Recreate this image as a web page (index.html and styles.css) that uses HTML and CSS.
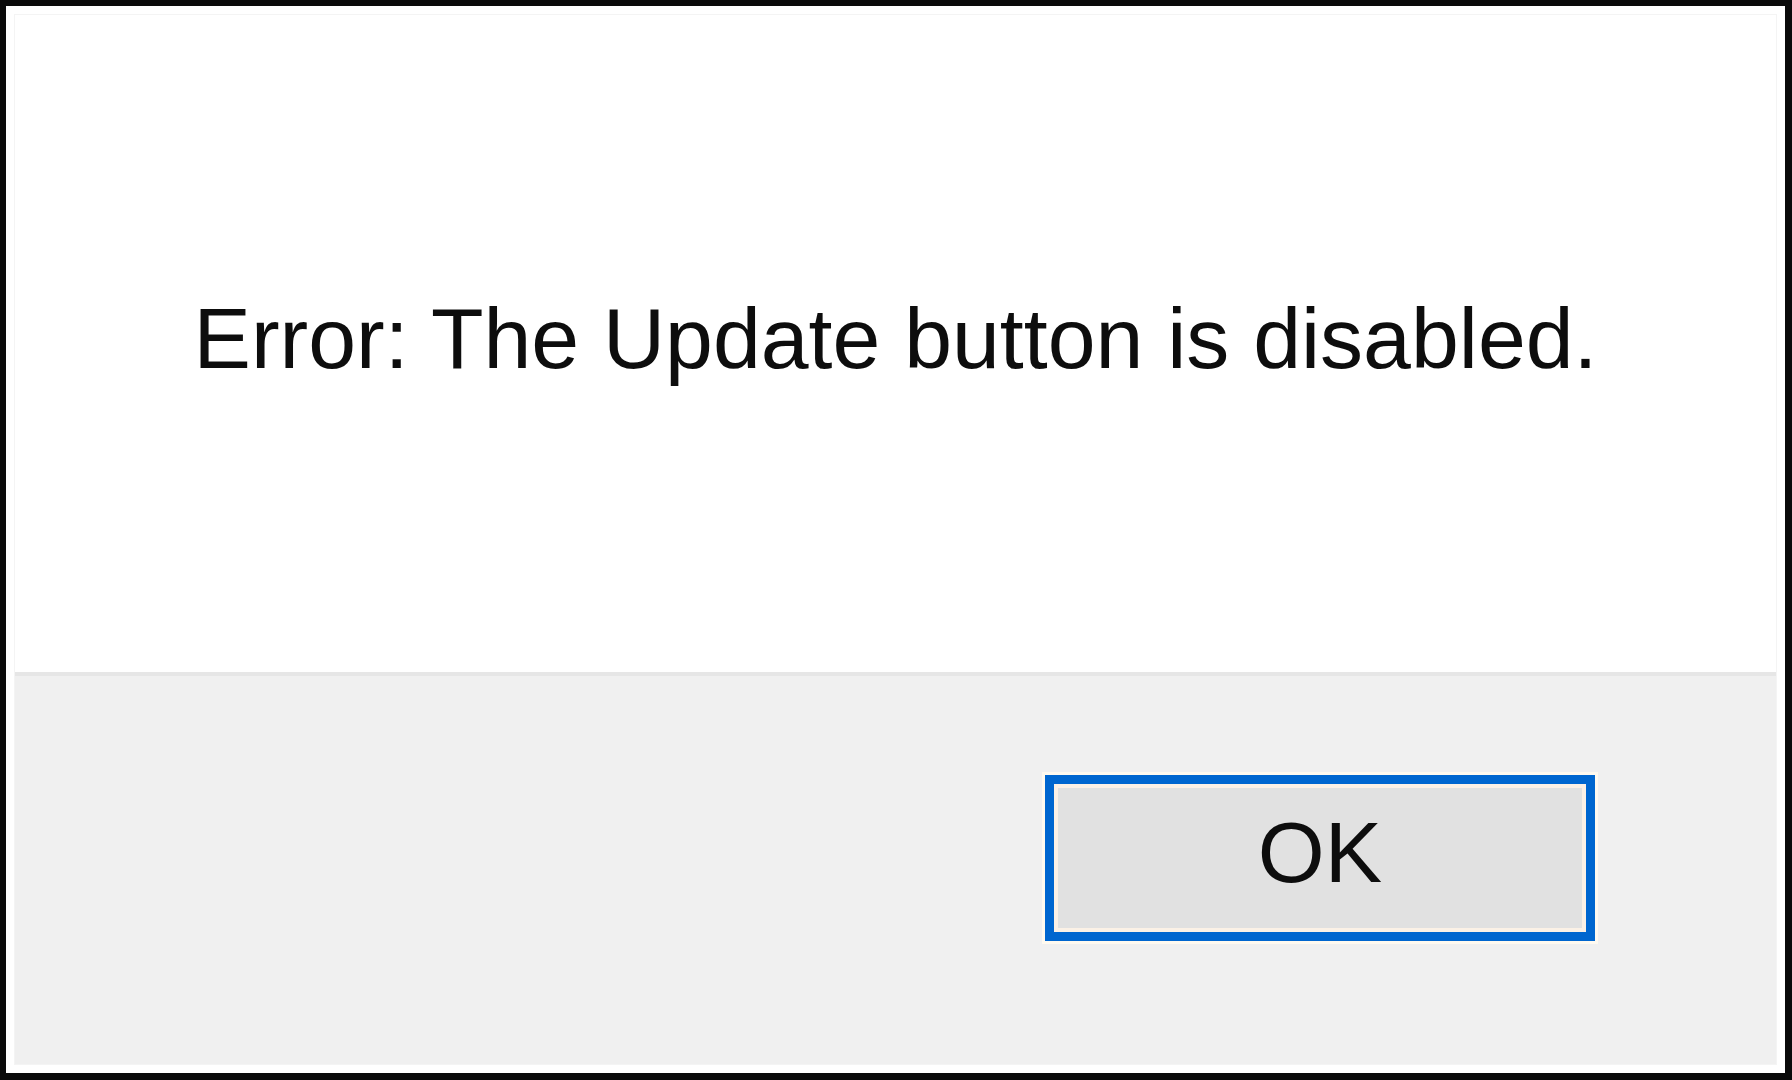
FILE: index.html
```html
<!DOCTYPE html>
<html lang="en">
<head>
    <meta charset="utf-8">
    <meta name="viewport" content="width=device-width, initial-scale=1.0">
    <title>Error</title>
    <link rel="stylesheet" href="styles.css">
</head>
<body>
    <div class="frame">
        <div class="dialog">
            <div class="message">
                <p>Error: The Update button is disabled.</p>
            </div>
            <div class="footer">
                <button type="button" class="ok-button">OK</button>
            </div>
        </div>
    </div>
</body>
</html>
```

FILE: styles.css
```css
html, body {
    margin: 0;
    padding: 0;
    height: 100%;
}

body {
    font-family: "Liberation Sans", Arial, sans-serif;
    background-color: #0a0a0a;
}

.frame {
    box-sizing: border-box;
    height: 1080px;
    border-style: solid;
    border-color: #0a0a0a;
    border-width: 6px 7px 7px 6px;
    padding: 8px;
    background-color: #ffffff;
    display: flex;
}

.dialog {
    flex: 1;
    display: flex;
    flex-direction: column;
    border: 1px solid #f4f4f4;
}

.message {
    height: 661px;
    box-sizing: border-box;
    padding-top: 280px;
    background-color: #ffffff;
    border-bottom: 4px solid #e6e6e6;
}

.message p {
    margin: 0;
    font-size: 86px;
    line-height: 86px;
    color: #0d0d0d;
    text-align: center;
}

.footer {
    flex: 1;
    background-color: #f0f0f0;
    display: flex;
    justify-content: flex-end;
    align-items: flex-start;
    padding-top: 99px;
    padding-right: 181px;
}

.ok-button {
    box-sizing: border-box;
    width: 550px;
    height: 166px;
    padding: 25px 0 37px;
    font-family: "Liberation Sans", Arial, sans-serif;
    font-size: 86px;
    line-height: 86px;
    color: #0d0d0d;
    background-color: #e1e1e1;
    border: 9px solid #0066cf;
    border-radius: 0;
    box-shadow: inset 0 0 0 4px #fbf1e6, 0 0 0 3px #fffaf0;
    cursor: pointer;
}
```
